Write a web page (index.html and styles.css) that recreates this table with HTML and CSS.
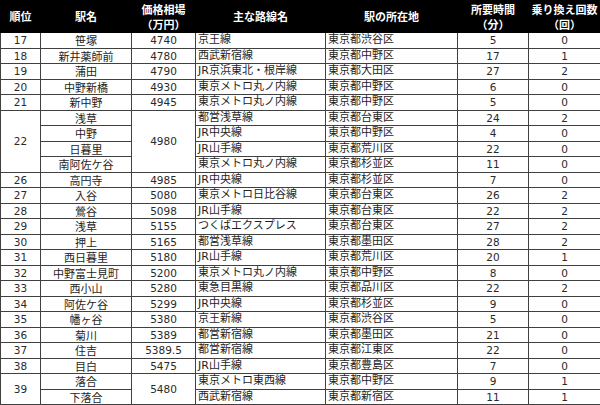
FILE: index.html
```html
<!DOCTYPE html>
<html lang="ja">
<head>
<meta charset="utf-8">
<link rel="stylesheet" href="styles.css">
</head>
<body>
<table class="rank">
  <colgroup>
    <col class="c-rank"><col class="c-name"><col class="c-price"><col class="c-line"><col class="c-addr"><col class="c-time"><col class="c-trans">
  </colgroup>
  <thead>
    <tr>
      <th>順位</th>
      <th>駅名</th>
      <th>価格相場<br>（万円）</th>
      <th>主な路線名</th>
      <th>駅の所在地</th>
      <th>所要時間<br>（分）</th>
      <th>乗り換え回数<br>（回）</th>
    </tr>
  </thead>
  <tbody>
    <tr><td class="num">17</td><td class="ctr">笹塚</td><td class="num">4740</td><td class="txt">京王線</td><td class="txt">東京都渋谷区</td><td class="num">5</td><td class="num">0</td></tr>
    <tr><td class="num">18</td><td class="ctr">新井薬師前</td><td class="num">4780</td><td class="txt">西武新宿線</td><td class="txt">東京都中野区</td><td class="num">17</td><td class="num">1</td></tr>
    <tr><td class="num">19</td><td class="ctr">蒲田</td><td class="num">4790</td><td class="txt">JR京浜東北・根岸線</td><td class="txt">東京都大田区</td><td class="num">27</td><td class="num">2</td></tr>
    <tr><td class="num">20</td><td class="ctr">中野新橋</td><td class="num">4930</td><td class="txt">東京メトロ丸ノ内線</td><td class="txt">東京都中野区</td><td class="num">6</td><td class="num">0</td></tr>
    <tr><td class="num">21</td><td class="ctr">新中野</td><td class="num">4945</td><td class="txt">東京メトロ丸ノ内線</td><td class="txt">東京都中野区</td><td class="num">5</td><td class="num">0</td></tr>
    <tr><td class="num" rowspan="4">22</td><td class="ctr">浅草</td><td class="num" rowspan="4">4980</td><td class="txt">都営浅草線</td><td class="txt">東京都台東区</td><td class="num">24</td><td class="num">2</td></tr>
    <tr><td class="ctr">中野</td><td class="txt">JR中央線</td><td class="txt">東京都中野区</td><td class="num">4</td><td class="num">0</td></tr>
    <tr><td class="ctr">日暮里</td><td class="txt">JR山手線</td><td class="txt">東京都荒川区</td><td class="num">22</td><td class="num">0</td></tr>
    <tr><td class="ctr">南阿佐ケ谷</td><td class="txt">東京メトロ丸ノ内線</td><td class="txt">東京都杉並区</td><td class="num">11</td><td class="num">0</td></tr>
    <tr><td class="num">26</td><td class="ctr">高円寺</td><td class="num">4985</td><td class="txt">JR中央線</td><td class="txt">東京都杉並区</td><td class="num">7</td><td class="num">0</td></tr>
    <tr><td class="num">27</td><td class="ctr">入谷</td><td class="num">5080</td><td class="txt">東京メトロ日比谷線</td><td class="txt">東京都台東区</td><td class="num">26</td><td class="num">2</td></tr>
    <tr><td class="num">28</td><td class="ctr">鶯谷</td><td class="num">5098</td><td class="txt">JR山手線</td><td class="txt">東京都台東区</td><td class="num">22</td><td class="num">2</td></tr>
    <tr><td class="num">29</td><td class="ctr">浅草</td><td class="num">5155</td><td class="txt">つくばエクスプレス</td><td class="txt">東京都台東区</td><td class="num">27</td><td class="num">2</td></tr>
    <tr><td class="num">30</td><td class="ctr">押上</td><td class="num">5165</td><td class="txt">都営浅草線</td><td class="txt">東京都墨田区</td><td class="num">28</td><td class="num">2</td></tr>
    <tr><td class="num">31</td><td class="ctr">西日暮里</td><td class="num">5180</td><td class="txt">JR山手線</td><td class="txt">東京都荒川区</td><td class="num">20</td><td class="num">1</td></tr>
    <tr><td class="num">32</td><td class="ctr">中野富士見町</td><td class="num">5200</td><td class="txt">東京メトロ丸ノ内線</td><td class="txt">東京都中野区</td><td class="num">8</td><td class="num">0</td></tr>
    <tr><td class="num">33</td><td class="ctr">西小山</td><td class="num">5280</td><td class="txt">東急目黒線</td><td class="txt">東京都品川区</td><td class="num">22</td><td class="num">2</td></tr>
    <tr><td class="num">34</td><td class="ctr">阿佐ケ谷</td><td class="num">5299</td><td class="txt">JR中央線</td><td class="txt">東京都杉並区</td><td class="num">9</td><td class="num">0</td></tr>
    <tr><td class="num">35</td><td class="ctr">幡ヶ谷</td><td class="num">5380</td><td class="txt">京王新線</td><td class="txt">東京都渋谷区</td><td class="num">5</td><td class="num">0</td></tr>
    <tr><td class="num">36</td><td class="ctr">菊川</td><td class="num">5389</td><td class="txt">都営新宿線</td><td class="txt">東京都墨田区</td><td class="num">21</td><td class="num">0</td></tr>
    <tr><td class="num">37</td><td class="ctr">住吉</td><td class="num">5389.5</td><td class="txt">都営新宿線</td><td class="txt">東京都江東区</td><td class="num">22</td><td class="num">0</td></tr>
    <tr><td class="num">38</td><td class="ctr">目白</td><td class="num">5475</td><td class="txt">JR山手線</td><td class="txt">東京都豊島区</td><td class="num">7</td><td class="num">0</td></tr>
    <tr><td class="num" rowspan="2">39</td><td class="ctr">落合</td><td class="num" rowspan="2">5480</td><td class="txt">東京メトロ東西線</td><td class="txt">東京都中野区</td><td class="num">9</td><td class="num">1</td></tr>
    <tr><td class="ctr">下落合</td><td class="txt">西武新宿線</td><td class="txt">東京都新宿区</td><td class="num">11</td><td class="num">1</td></tr>
  </tbody>
</table>
</body>
</html>
```

FILE: styles.css
```css
html, body {
  margin: 0;
  padding: 0;
  background: #ffffff;
}

body {
  width: 600px;
  height: 405px;
  overflow: hidden;
  font-family: "DejaVu Sans", "Noto Sans CJK JP", sans-serif;
  color: #1e1e1e;
}

.rank {
  width: 600px;
  border-collapse: collapse;
  table-layout: fixed;
}

.c-rank { width: 40px; }
.c-name { width: 91px; }
.c-price { width: 64px; }
.c-line { width: 130px; }
.c-addr { width: 132px; }
.c-time { width: 71px; }
.c-trans { width: 72px; }

.rank thead th {
  background: #000000;
  color: #ffffff;
  font-family: "Noto Sans CJK JP", sans-serif;
  font-weight: 700;
  font-size: 11px;
  line-height: 15px;
  height: 31px;
  padding: 0;
  border: 1px solid #000000;
  text-align: center;
  vertical-align: middle;
}

.rank tbody tr {
  height: 15.5px;
}

.rank td {
  padding: 0;
  border: 1px solid #404040;
  line-height: 14px;
  vertical-align: middle;
  white-space: nowrap;
  overflow: hidden;
}

.num {
  text-align: center;
  font-size: 10.5px;
  color: #2a2a2a;
}

.ctr {
  text-align: center;
  font-family: "Noto Sans CJK JP", sans-serif;
  font-size: 11px;
}

.txt {
  text-align: left;
  padding-left: 2px !important;
  font-family: "DejaVu Sans", "Noto Sans CJK JP", sans-serif;
  font-size: 11px;
}
```
